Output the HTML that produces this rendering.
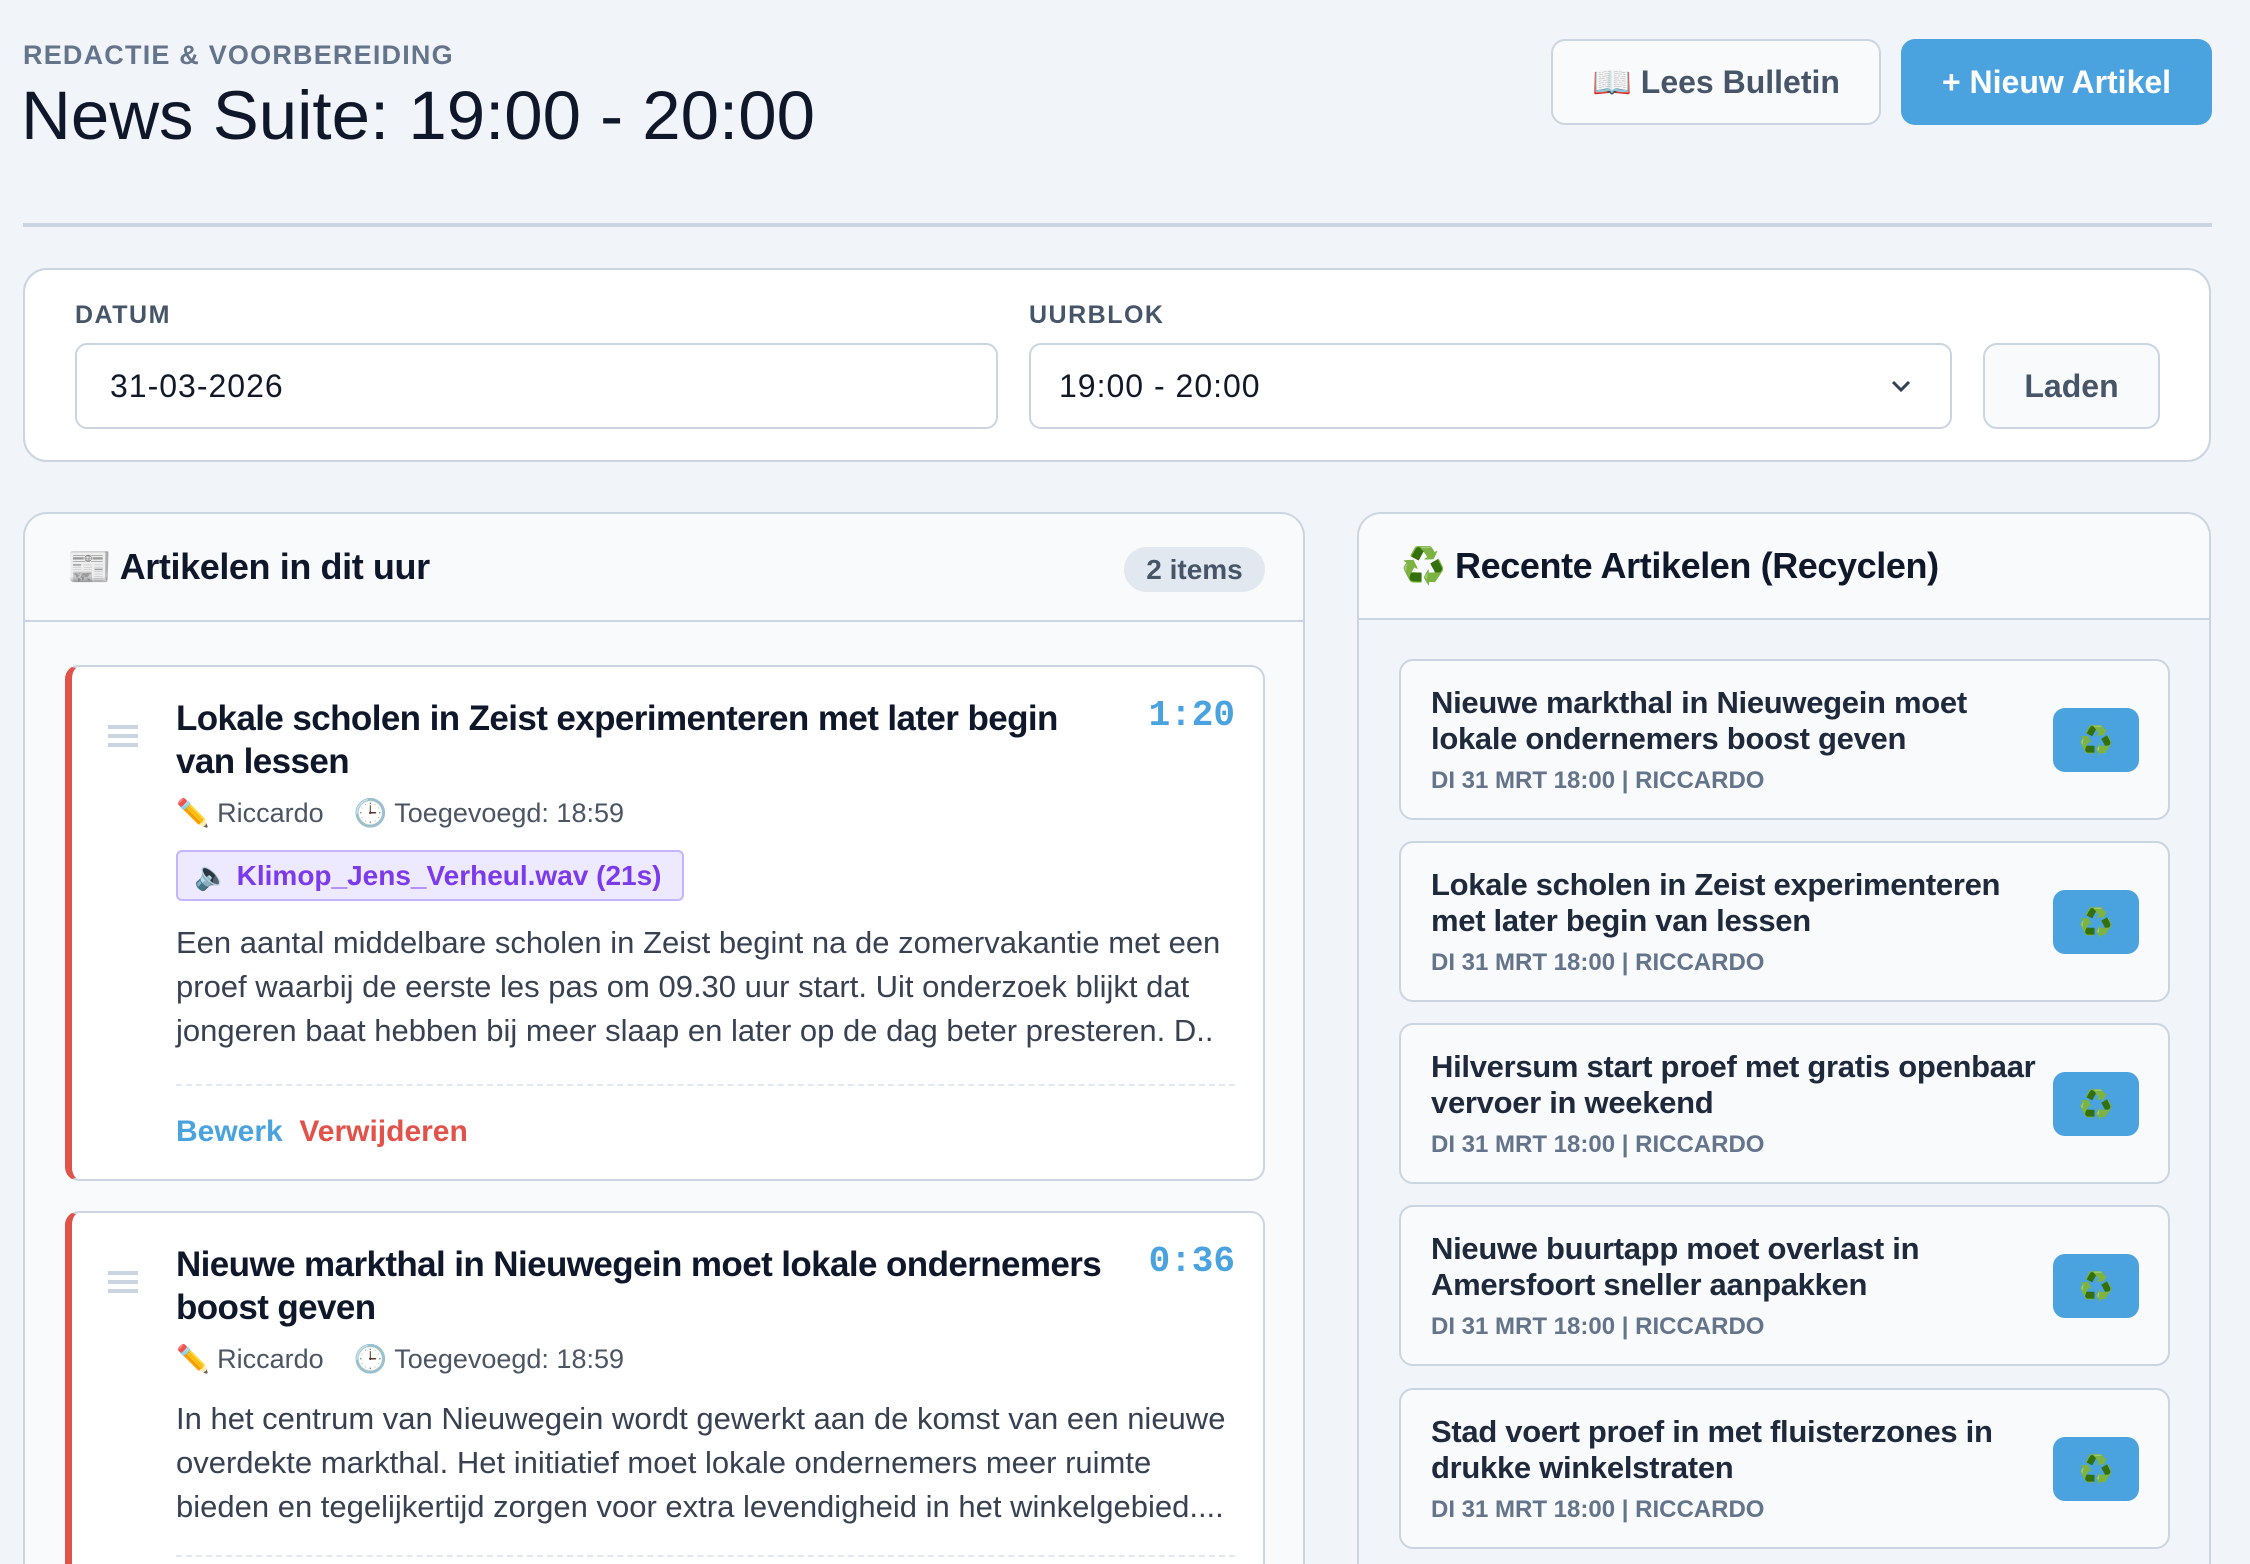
<!DOCTYPE html>
<html><head><meta charset="utf-8"><style>
*{box-sizing:border-box;margin:0;padding:0}
html,body{width:2250px;height:1564px;overflow:hidden}
body{background:#f1f4f8;font-family:"Liberation Sans","Noto Sans CJK JP",sans-serif;color:#111827;position:relative}
.a{position:absolute;white-space:nowrap}
.btn{position:absolute;border-radius:14px;display:flex;align-items:center;justify-content:center;font-size:32px;font-weight:bold}
.lbl{font-size:25px;font-weight:bold;color:#475569;letter-spacing:1.5px}
.inp{position:absolute;top:343px;height:86px;background:#fff;border:2px solid #cbd5e1;border-radius:12px;font-size:32px;display:flex;align-items:center;color:#111827;letter-spacing:1px}
.panel{position:absolute;top:512px;background:#f8fafc;border:2px solid #cbd5e1;border-bottom:none;border-radius:24px 24px 0 0;height:1052px;overflow:hidden}
.ph{height:108px;border-bottom:2px solid #cbd5e1;position:relative}
.card{position:absolute;left:40px;width:1200px;background:#fff;border:2px solid #cbd5e1;border-left:7px solid #e0524a;border-radius:14px;overflow:hidden}
.t{position:absolute;left:104px;font-size:35px;font-weight:bold;line-height:43px;color:#0f172a;width:985px;white-space:normal;letter-spacing:-0.6px}
.dur{position:absolute;right:28px;font-family:"Liberation Mono",monospace;font-size:36px;font-weight:bold;color:#4aa3df}
.meta{position:absolute;left:104px;font-size:27px;color:#4b5563}
.body{position:absolute;left:104px;width:1075px;font-size:31px;line-height:44px;color:#374151;letter-spacing:0px}
.dash{position:absolute;left:104px;right:28px;border-top:2px dashed #e2e8f0}
.hd{position:absolute;left:36px}
.ri{position:absolute;left:40px;width:771px;height:161px;background:#f8fafc;border:2px solid #cbd5e1;border-radius:14px}
.ri .tt{position:absolute;left:30px;top:24px;font-size:31px;line-height:36px;color:#1e293b;font-weight:600;width:620px;letter-spacing:-0.3px}
.ri .mm{position:absolute;left:30px;top:106px;font-size:24px;font-weight:bold;color:#64748b}
.ri .rb{position:absolute;left:652px;top:47px;width:86px;height:64px;background:#4aa3df;border-radius:12px;display:flex;align-items:center;justify-content:center;font-size:28px;color:#2e9e3a}
</style></head><body>
<div class="a" style="left:23px;top:40px;font-size:27px;font-weight:bold;color:#64748b;letter-spacing:1.2px">REDACTIE &amp; VOORBEREIDING</div>
<div class="a" style="left:21px;top:76px;font-size:69px;color:#0f172a">News Suite: 19:00 - 20:00</div>
<div class="btn" style="left:1551px;top:39px;width:330px;height:86px;background:#f8fafc;border:2px solid #cbd5e1;color:#475569">📖 Lees Bulletin</div>
<div class="btn" style="left:1901px;top:39px;width:311px;height:86px;background:#4aa3df;color:#fff">+ Nieuw Artikel</div>
<div class="a" style="left:23px;top:223px;width:2189px;height:4px;background:#cbd5e1"></div>

<div class="a" style="left:23px;top:268px;width:2188px;height:194px;background:#fff;border:2px solid #cbd5e1;border-radius:24px"></div>
<div class="a lbl" style="left:75px;top:301px">DATUM</div>
<div class="a lbl" style="left:1029px;top:301px">UURBLOK</div>
<div class="inp" style="left:75px;width:923px;padding-left:33px">31-03-2026</div>
<div class="inp" style="left:1029px;width:923px;padding-left:28px">19:00 - 20:00
<svg style="position:absolute;right:38px;top:34px" width="22" height="14" viewBox="0 0 22 14"><path d="M3 3l8 8 8-8" fill="none" stroke="#334155" stroke-width="3"/></svg></div>
<div class="btn" style="left:1983px;top:343px;width:177px;height:86px;background:#f8fafc;border:2px solid #cbd5e1;color:#475569;font-weight:600">Laden</div>

<div class="panel" style="left:23px;width:1282px">
 <div class="ph">
  <div class="a" style="left:42px;top:32px;font-size:36px;font-weight:bold;color:#0f172a;letter-spacing:-0.4px">📰 Artikelen in dit uur</div>
  <div class="a" style="left:1099px;top:33px;width:141px;height:45px;background:#e2e8f0;border-radius:23px;font-size:28px;font-weight:bold;color:#475569;text-align:center;line-height:45px">2 items</div>
 </div>
 <div class="card" style="top:151px;height:516px">
  <svg class="hd" style="top:58px" width="30" height="22" viewBox="0 0 30 22"><path d="M0 2h30M0 11h30M0 20h30" stroke="#cbd5e1" stroke-width="4"/></svg>
  <div class="t" style="top:30px;width:930px">Lokale scholen in Zeist experimenteren met later begin van lessen</div>
  <div class="dur" style="top:28px">1:20</div>
  <div class="meta" style="top:130px">✏️ Riccardo &nbsp;&nbsp; 🕒 Toegevoegd: 18:59</div>
  <div class="a" style="left:104px;top:183px;width:508px;height:51px;background:#ede9fe;border:2px solid #c4b5fd;border-radius:6px;font-size:28px;font-weight:bold;color:#7c3aed;line-height:47px;padding-left:16px">🔈 Klimop_Jens_Verheul.wav (21s)</div>
  <div class="body" style="top:254px">Een aantal middelbare scholen in Zeist begint na de zomervakantie met een proef waarbij de eerste les pas om 09.30 uur start. Uit onderzoek blijkt dat jongeren baat hebben bij meer slaap en later op de dag beter presteren. D..</div>
  <div class="dash" style="top:417px"></div>
  <div class="a" style="left:104px;top:448px;font-size:30px;font-weight:600"><span style="color:#4aa3df">Bewerk</span>&nbsp;&nbsp;<span style="color:#e0524a">Verwijderen</span></div>
 </div>
 <div class="card" style="top:697px;height:355px;border-bottom:none;border-radius:14px 14px 0 0">
  <svg class="hd" style="top:58px" width="30" height="22" viewBox="0 0 30 22"><path d="M0 2h30M0 11h30M0 20h30" stroke="#cbd5e1" stroke-width="4"/></svg>
  <div class="t" style="top:30px;width:1010px">Nieuwe markthal in Nieuwegein moet lokale ondernemers boost geven</div>
  <div class="dur" style="top:28px">0:36</div>
  <div class="meta" style="top:130px">✏️ Riccardo &nbsp;&nbsp; 🕒 Toegevoegd: 18:59</div>
  <div class="body" style="top:184px">In het centrum van Nieuwegein wordt gewerkt aan de komst van een nieuwe overdekte markthal. Het initiatief moet lokale ondernemers meer ruimte bieden en tegelijkertijd zorgen voor extra levendigheid in het winkelgebied....</div>
  <div class="dash" style="top:342px"></div>
 </div>
</div>

<div class="panel" style="left:1357px;width:854px;background:#f1f4f8">
 <div class="ph" style="height:106px;background:#f8fafc">
  <div class="a" style="left:42px;top:31px;font-size:36px;font-weight:bold;color:#0f172a;letter-spacing:-0.4px">♻️ Recente Artikelen (Recyclen)</div>
 </div>
 <div class="ri" style="top:145px"><div class="tt">Nieuwe markthal in Nieuwegein moet lokale ondernemers boost geven</div><div class="mm">DI 31 MRT 18:00 | RICCARDO</div><div class="rb">♻️</div></div>
 <div class="ri" style="top:327px"><div class="tt">Lokale scholen in Zeist experimenteren met later begin van lessen</div><div class="mm">DI 31 MRT 18:00 | RICCARDO</div><div class="rb">♻️</div></div>
 <div class="ri" style="top:509px"><div class="tt">Hilversum start proef met gratis openbaar vervoer in weekend</div><div class="mm">DI 31 MRT 18:00 | RICCARDO</div><div class="rb">♻️</div></div>
 <div class="ri" style="top:691px"><div class="tt">Nieuwe buurtapp moet overlast in Amersfoort sneller aanpakken</div><div class="mm">DI 31 MRT 18:00 | RICCARDO</div><div class="rb">♻️</div></div>
 <div class="ri" style="top:874px"><div class="tt">Stad voert proef in met fluisterzones in drukke winkelstraten</div><div class="mm">DI 31 MRT 18:00 | RICCARDO</div><div class="rb">♻️</div></div>
</div>
</body></html>
